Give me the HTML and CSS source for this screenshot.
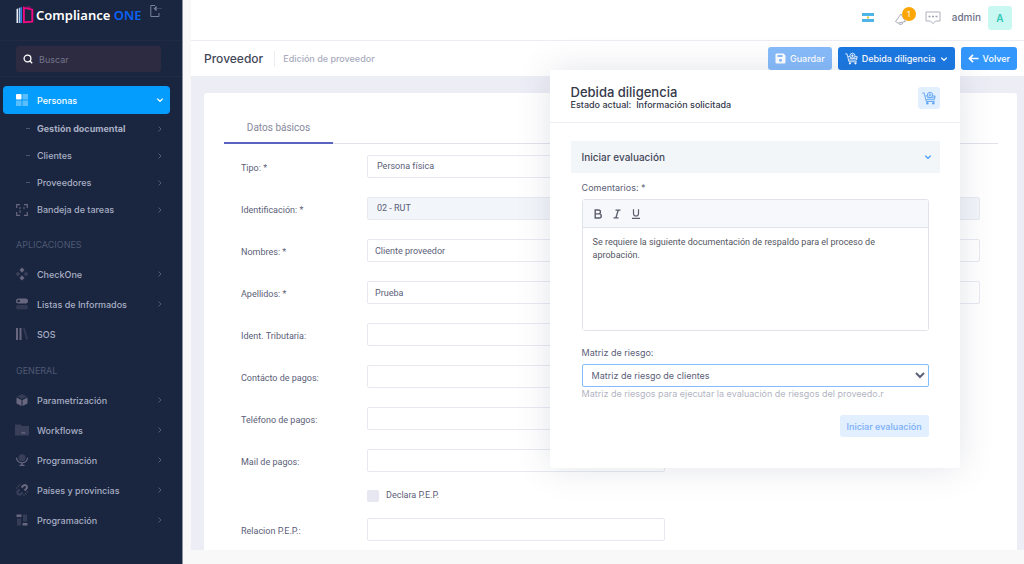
FILE: index.html
```html
<!DOCTYPE html>
<html lang="es">
<head>
<meta charset="utf-8">
<meta name="viewport" content="width=device-width, initial-scale=1">
<title>Compliance ONE - Proveedor</title>
<link rel="stylesheet" href="styles.css">
</head>
<body>
<svg class="defs" aria-hidden="true">
  <symbol id="chev" viewBox="0 0 8 8"><path d="M2.5 1.5 5 4 2.5 6.5" fill="none" stroke="currentColor" stroke-width="1"/></symbol>
  <symbol id="chev-down" viewBox="0 0 8 8"><path d="M1.2 2.6 4 5.3 6.800 2.600" fill="none" stroke="currentColor" stroke-width="1.300"/></symbol>
  <symbol id="cart" viewBox="0 0 14 14">
    <g fill="none" stroke="currentColor" stroke-width=".9">
      <path d="M.3 2h1.900l2.100 8.500h8.400M3.200 5h2M10.800 5h2.400l-.9 3.700H3.900M5 6.800h7.800"/>
      <circle cx="8" cy="4" r="2.700"/><path d="M8 2.500v3M6.600 4h2.800"/>
    </g>
    <circle cx="5.300" cy="12.200" r="1.200" fill="currentColor"/><circle cx="11.300" cy="12.200" r="1.200" fill="currentColor"/>
  </symbol>
</svg>
<div class="layout">
  <aside class="sidebar">
    <div class="brand">
      <a class="brand-link" href="#">
        <svg class="brand-mark" viewBox="0 0 18 18" aria-hidden="true">
          <path d="M.5 3 2 2.500V17H.5z" fill="#e8edf5"/><path d="M2.700 2 4.400 1.500V17H2.700z" fill="#a9c8ee"/><path d="M4.400 1.500 6 1v16H4.400z" fill="#2f7de0"/>
          <path d="M7.900 1.600 16.300 3.700v12l-8.400.5z" fill="none" stroke="#ee0a80" stroke-width="1.900"/>
          <path d="M7.900 1.600 14 .8v2.500" fill="none" stroke="#b30d74" stroke-width=".9"/>
        </svg>
        <span>Compliance <b>ONE</b></span>
      </a>
      <button class="collapse" type="button" aria-label="Contraer menú">
        <svg viewBox="0 0 14 14"><path d="M6 1.500H1.800v11H10V9" fill="none" stroke="#77809a"/><path d="M13 4.500H6M7.500 2v5L5 4.500z" fill="#aab0c2" stroke="#4d5871" stroke-width=".6"/></svg>
      </button>
    </div>
    <div class="search-wrap">
      <label class="search">
        <svg viewBox="0 0 10 10" aria-hidden="true"><circle cx="4.500" cy="4.500" r="3.400" fill="none" stroke="#fff" stroke-width="1.300"/><path d="m7 7 2.200 2.200" stroke="#fff" stroke-width="1.300"/></svg>
        <input type="search" placeholder="Buscar" aria-label="Buscar">
      </label>
    </div>
    <nav class="nav">
      <a class="item active" href="#"><svg class="ico" viewBox="0 0 12 12"><rect width="5.500" height="5.500" rx="1" fill="#fff"/><path d="M6.500 0H12v5.500H6.500zM0 6.500h5.500V12H0zM6.500 6.500H12V12H6.500z" fill="#fff" opacity=".35"/></svg><span>Personas</span><svg class="arrow"><use href="#chev-down"/></svg></a>
      <a class="item sub strong" href="#"><i></i><span>Gestión documental</span><svg class="arrow"><use href="#chev"/></svg></a>
      <a class="item sub" href="#"><i></i><span>Clientes</span><svg class="arrow"><use href="#chev"/></svg></a>
      <a class="item sub" href="#"><i></i><span>Proveedores</span><svg class="arrow"><use href="#chev"/></svg></a>
      <a class="item sub" href="#"><svg class="ico" viewBox="0 0 12 12"><path d="M.7 4V.7H4M8 .7h3.300V4M11.300 8v3.300H8M4 11.300H.7V8" fill="none" stroke="currentColor" stroke-width="1.200"/><path d="M3 3h2v2H3zM3 6h2v3H3zM7 3h2v2H7z" fill="currentColor" opacity=".5"/></svg><span>Bandeja de tareas</span><svg class="arrow"><use href="#chev"/></svg></a>
      <h2>APLICACIONES</h2>
      <a class="item" href="#"><svg class="ico" viewBox="0 0 12 12"><path d="m6-.5 2.500 2.600L6 4.700 3.500 2.100zM6 7.300l2.500 2.600L6 12.500 3.500 9.900z" fill="currentColor"/><path d="m2 3.600 2.300 2.400L2 8.400-.3 6zM10 3.600 12.300 6 10 8.400 7.700 6z" fill="currentColor" opacity=".4"/></svg><span>CheckOne</span><svg class="arrow"><use href="#chev"/></svg></a>
      <a class="item" href="#"><svg class="ico" viewBox="0 0 12 12"><rect y=".5" width="12" height="5" rx="2.500" fill="currentColor"/><circle cx="2.700" cy="3" r="1.300" fill="#1a2640"/><rect y="7" width="12" height="4.500" rx="2.200" fill="currentColor" opacity=".3"/></svg><span>Listas de Informados</span><svg class="arrow"><use href="#chev"/></svg></a>
      <a class="item" href="#"><svg class="ico" viewBox="0 0 12 12"><path d="M0 0h2v12H0zM3.500 0h2v12h-2z" fill="currentColor"/><path d="m7 .6 1.600-.6 3.400 11-1.600.8z" fill="currentColor" opacity=".35"/></svg><span>SOS</span></a>
      <h2>GENERAL</h2>
      <a class="item" href="#"><svg class="ico" viewBox="0 0 12 12"><path d="m6 0 5 2.500L6 5 1 2.500z" fill="currentColor" opacity=".35"/><path d="m.5 3.500 5 2.500v6l-5-2.500zM11.500 3.500l-5 2.500v6l5-2.500z" fill="currentColor"/></svg><span>Parametrización</span><svg class="arrow"><use href="#chev"/></svg></a>
      <a class="item" href="#"><svg class="ico" viewBox="0 0 12 12"><path d="M-1 .5h5.500L6 2h7v9.500H-1z" fill="currentColor" opacity=".4"/><path d="m5 9.500 1.500-2 1.300 1 1-.6L10 9.500z" fill="currentColor"/></svg><span>Workflows</span><svg class="arrow"><use href="#chev"/></svg></a>
      <a class="item" href="#"><svg class="ico" viewBox="0 0 12 12"><circle cx="6" cy="3.700" r="3.500" fill="currentColor" opacity=".4"/><path d="M.5 3.800C.8 10.500 11.200 10.500 11.500 3.800M6 8.500v3M3.500 11.400h5" fill="none" stroke="currentColor" stroke-width="1.300"/></svg><span>Programación</span><svg class="arrow"><use href="#chev"/></svg></a>
      <a class="item" href="#"><svg class="ico" viewBox="0 0 12 12"><path d="m5.500 3.500 1.800-1.800a2 2 0 0 1 3 3L8.500 6.500" fill="none" stroke="currentColor" stroke-width="2"/><path d="M3.500 5.500 2 7a2 2 0 0 0 3 3l1.500-1.500" fill="none" stroke="currentColor" stroke-width="2" opacity=".4"/><path d="M1.500 1.500 3 3M4 0v1.500M0 4h1.500M9 9l1.500 1.500M8 10.500V12M10.500 8H12" stroke="currentColor" opacity=".6"/></svg><span>Países y provincias</span><svg class="arrow"><use href="#chev"/></svg></a>
      <a class="item" href="#"><svg class="ico" viewBox="0 0 12 12"><path d="M.5.5h5v2.500h-5zM6.500 9h5v2.500h-5z" fill="currentColor"/><path d="M1 4.500h4v7H1zM7 .5h4v7H7z" fill="currentColor" opacity=".35"/></svg><span>Programación</span><svg class="arrow"><use href="#chev"/></svg></a>
    </nav>
  </aside>

  <div class="app">
    <header class="topbar">
      <svg class="flag" viewBox="0 0 12 9" role="img" aria-label="Argentina"><path d="M0 0h12v9H0z" fill="#4fb4e8"/><path d="M0 3h12v3H0z" fill="#fff"/><circle cx="6" cy="4.500" r="1.200" fill="#e3cf45"/></svg>
      <button class="notify" type="button" aria-label="Notificaciones">
        <svg viewBox="0 0 14 14"><path d="M1.500 10.500 7 3l4.500 7.500-7.500 1.700zM5 12.200l.6 1.300 3-.6-.3-1.300" fill="none" stroke="#a9abb8"/></svg>
        <span class="badge">1</span>
      </button>
      <button class="chat" type="button" aria-label="Mensajes"><svg viewBox="0 0 16 14"><path d="M1 1h14v9h-4.500L8 12.700 5.500 10H1z" fill="none" stroke="#b0b2be"/><path d="M3.500 5.500h2M7 5.500h2M10.500 5.500h2" stroke="#a0a2b0" stroke-width="1.500"/></svg></button>
      <span class="user">admin</span>
      <span class="avatar">A</span>
    </header>

    <div class="subheader">
      <h1>Proveedor</h1>
      <span class="crumb">Edición de proveedor</span>
      <div class="actions">
        <button class="btn light" type="button"><svg viewBox="0 0 11 11"><path d="M1.500.5h7L10.500 2.500v7a1 1 0 0 1-1 1h-8a1 1 0 0 1-1-1v-8a1 1 0 0 1 1-1z" fill="#fff"/><path d="M2.500 2h5v2h-5z" fill="#86bbfa"/><circle cx="5.500" cy="7.300" r="1.500" fill="#86bbfa"/></svg>Guardar</button>
        <div class="dropdown">
          <button class="btn dark" type="button" aria-expanded="true"><svg class="cart"><use href="#cart"/></svg>Debida diligencia<svg class="caret"><use href="#chev-down"/></svg></button>
          <section class="popover" aria-label="Debida diligencia">
            <header class="pop-head">
              <div>
                <h2>Debida diligencia</h2>
                <p>Estado actual:&nbsp; Información solicitada</p>
              </div>
              <button class="pop-icon" type="button" aria-label="Debida diligencia"><svg><use href="#cart"/></svg></button>
            </header>
            <div class="pop-body">
              <button class="accordion" type="button" aria-expanded="true">Iniciar evaluación<svg><use href="#chev-down"/></svg></button>
              <div class="pop-form">
                <label for="comentarios">Comentarios: *</label>
                <div class="editor">
                  <div class="toolbar">
                    <button type="button" aria-label="Negrita"><svg viewBox="0 0 10 10"><path d="M2.200 1h3.300a1.900 1.900 0 0 1 0 3.900H2.200zM2.200 4.900h4a2 2 0 0 1 0 4.100h-4z" fill="none" stroke="currentColor" stroke-width="1.400"/></svg></button>
                    <button type="button" aria-label="Cursiva"><svg viewBox="0 0 10 10"><path d="M3.500 1.200h5M1.500 8.800h5M6.200 1.200 3.900 8.800" fill="none" stroke="currentColor" stroke-width="1.300"/></svg></button>
                    <button type="button" aria-label="Subrayado"><svg viewBox="0 0 10 10"><path d="M2.500.3v4.200a2.500 2.500 0 0 0 5 0V.3M1 9.300h8" fill="none" stroke="currentColor" stroke-width="1.200"/></svg></button>
                  </div>
                  <textarea id="comentarios">Se requiere la siguiente documentación de respaldo para el proceso de aprobación.</textarea>
                </div>
                <label for="matriz">Matriz de riesgo:</label>
                <select id="matriz"><option>Matriz de riesgo de clientes</option></select>
                <p class="hint">Matriz de riesgos para ejecutar la evaluación de riesgos del proveedo.r</p>
                <button class="start" type="button">Iniciar evaluación</button>
              </div>
            </div>
          </section>
        </div>
        <button class="btn primary" type="button"><svg viewBox="0 0 12 10"><path d="M11.500 5H1.500M5.500 1l-4 4 4 4" fill="none" stroke="#fff" stroke-width="1.800"/></svg>Volver</button>
      </div>
    </div>

    <main class="content">
      <form class="card">
        <div class="tabs"><button type="button" class="tab">Datos básicos</button></div>
        <div class="fields">
          <div class="row"><label for="tipo">Tipo: *</label><select id="tipo" class="control pick"><option>Persona física</option></select></div>
          <div class="row"><label for="ident">Identificación: *</label><select id="ident" class="control pick" disabled><option>02 - RUT</option></select><input class="control" aria-label="Número de identificación" disabled></div>
          <div class="row"><label for="nombres">Nombres: *</label><input id="nombres" class="control" value="Cliente proveedor"><input class="control" aria-label="Segundo nombre"></div>
          <div class="row"><label for="apellidos">Apellidos: *</label><input id="apellidos" class="control" value="Prueba"><input class="control" aria-label="Segundo apellido"></div>
          <div class="row"><label for="trib">Ident. Tributaria:</label><input id="trib" class="control"></div>
          <div class="row"><label for="contacto">Contácto de pagos:</label><input id="contacto" class="control"></div>
          <div class="row"><label for="tel">Teléfono de pagos:</label><input id="tel" class="control"></div>
          <div class="row"><label for="mail">Mail de pagos:</label><input id="mail" class="control"></div>
          <div class="row check-row"><label class="check"><input type="checkbox">Declara P.E.P.</label></div>
          <div class="row"><label for="rel">Relacion P.E.P.:</label><input id="rel" class="control"></div>
        </div>
      </form>
    </main>
  </div>
</div>
</body>
</html>
```
FILE: styles.css
```css
* { box-sizing: border-box; }
body { margin: 0; background: #f8f8f8; color: #5c6078; font: 9px/13px Inter, sans-serif; }
button, input, select, textarea { font: inherit; color: inherit; margin: 0; }
button { border: 0; padding: 0; background: none; cursor: pointer; }
h1, h2, p { margin: 0; }
a { color: inherit; text-decoration: none; }
svg { display: block; flex: none; }
.defs { display: none; }

.layout { display: flex; min-height: 100vh; }

/* Sidebar */
.sidebar { flex: none; width: 183px; background: #1a2640; border-right: 1px solid #8b90a0; }
.brand { display: flex; justify-content: space-between; height: 41px; padding: 4px 19px 0 16px; border-bottom: 1px solid #202b43; }
.brand-link { display: flex; gap: 2px; height: 22px; align-items: center; color: #fff; font: 600 13px/20px "Noto Sans", sans-serif; }
.brand-link b { color: #0c62f5; font-weight: 600; }
.brand-mark { width: 18px; height: 18px; }
.collapse { width: 14px; height: 14px; }
.collapse svg { width: 14px; height: 14px; }
.search-wrap { padding: 5px 21px 4px 16px; border-bottom: 1px solid #202b43; }
.search { display: flex; align-items: center; gap: 6px; height: 26px; padding: 0 7px; border-radius: 3px; background: #2c2b41; }
.search svg { width: 10px; height: 10px; }
.search input { flex: 1; min-width: 0; border: 0; padding: 0; background: none; outline: 0; }
.search input::placeholder { color: #747389; opacity: 1; }
.nav { padding: 9px 12px 8px 3px; color: #a9afc4; font-weight: 500; }
.nav h2 { height: 36px; padding: 15px 0 0 13px; color: #4f5872; font-size: 9px; line-height: 13px; font-weight: 400; }
.item { display: flex; align-items: center; height: 30px; padding: 0 6px 0 13px; }
.item span { flex: 1; }
.item .ico { width: 12px; height: 12px; margin-right: 9px; color: #69677f; overflow: visible; }
.arrow { width: 8px; height: 8px; color: #525b76; }
.item.active { height: 28px; margin-bottom: 1px; border-radius: 4px; background: #049cfd; color: #fff; }
.item.active .ico { color: #fff; }
.item.active .arrow { color: #fff; }
.item.sub { height: 27px; }
.item.sub i { width: 4px; height: 1px; margin: 0 7px 0 10px; background: #4b5570; }
.item.strong { font-weight: 700; }

/* Application frame */
.app { flex: 1; min-width: 0; display: flex; flex-direction: column; margin: 0 0 14px 8px; background: #ecedf5; }
.topbar { display: flex; align-items: center; justify-content: flex-end; height: 40px; padding: 0 12px 5px 0; background: #fff; }
.flag { width: 12px; height: 9px; }
.notify { position: relative; width: 14px; height: 14px; margin-left: 20px; }
.notify svg { width: 14px; height: 14px; }
.badge { position: absolute; left: 8px; top: -4px; width: 14px; height: 14px; border-radius: 7px; background: #fca606; color: #fff; font-size: 8px; line-height: 14px; text-align: center; }
.chat { margin-left: 17px; }
.chat svg { width: 16px; height: 14px; }
.user { margin-left: 11px; color: #6c7085; font-size: 10px; font-weight: 500; }
.avatar { width: 24px; height: 24px; margin-left: 7px; border-radius: 3px; background: #c9f7f2; color: #2fc6b4; font-size: 10px; line-height: 24px; font-weight: 600; text-align: center; }
.subheader { display: flex; align-items: center; height: 36px; padding: 0 7px 0 13px; border-top: 1px solid #ececf3; background: #fff; }
.subheader h1 { padding-right: 11px; border-right: 1px solid #ebecf2; color: #434758; font-size: 12px; line-height: 16px; font-weight: 500; }
.crumb { padding-left: 8px; color: #a9abbd; font-weight: 500; }
.actions { display: flex; gap: 6px; margin-left: auto; }
.btn { display: flex; align-items: center; gap: 4px; height: 23px; padding: 0 7px; border-radius: 3px; color: #fff; font-weight: 500; white-space: nowrap; }
.btn svg { width: 11px; height: 11px; }
.btn .cart { width: 13px; height: 13px; }
.btn .caret { width: 8px; height: 8px; }
.light { background: #86bbfa; }
.dark { background: #1a78e2; }
.primary { background: #3497fc; }

/* Form */
.content { flex: 1; display: flex; padding: 17px 7px 0 13px; }
.card { flex: 1; min-width: 0; padding: 19px 19px 9px 20px; border-radius: 3px 3px 0 0; background: #fff; font: 9px/13px Roboto, sans-serif; }
.tabs { height: 32px; border-bottom: 1px solid #e1e2ea; }
.tab { width: 109px; height: 32px; border-bottom: 2px solid #5a64c0; color: #86889a; font-size: 10px; }
.fields { display: grid; gap: 19px; padding: 11px 18px 0 17px; }
.row { display: grid; grid-template-columns: 126px 1fr 1fr; align-items: center; }
.row > label:first-child { padding-top: 3px; }
.control { width: 100%; height: 23px; padding: 0 7px; border: 1px solid #e7e9f2; border-radius: 2px; background: #fff; }
.row .control:nth-child(2) { width: calc(100% - 9px); }
.row .control:nth-child(3) { margin-left: 9px; width: calc(100% - 9px); }
.control:disabled { background: #f2f5f9; color: #5c6078; opacity: 1; }
.pick { appearance: none; padding-left: 9px; }
.check-row { margin: -2px 0 -3px; }
.row > label.check { grid-column: 2; display: flex; align-items: center; gap: 7px; padding: 0; }
.check input { appearance: none; width: 12px; height: 12px; border-radius: 2px; background: #e6e7f1; }

/* Due diligence menu */
.dropdown { position: relative; }
.popover { position: absolute; z-index: 2; top: 23px; right: -5px; width: 410px; padding-bottom: 31px; background: #fff; border-radius: 2px; box-shadow: 0 0 34px rgba(70, 72, 110, .15); }
.pop-head { display: flex; align-items: center; justify-content: space-between; height: 53px; padding: 3px 20px 0 21px; border-bottom: 1px solid #ececf2; color: #34384a; }
.pop-head h2 { font-size: 13px; line-height: 14px; font-weight: 500; }
.pop-head p { line-height: 12px; font-size: 9px; font-weight: 500; }
.pop-icon { width: 22px; height: 22px; padding: 4px; border-radius: 3px; background: #e1effe; color: #5da4f5; }
.pop-icon svg { width: 14px; height: 14px; }
.pop-body { padding: 18px 20px 0 21px; }
.accordion { display: flex; align-items: center; justify-content: space-between; width: 100%; height: 32px; padding: 0 8px 0 11px; background: #f3f6f9; color: #434758; font-size: 10px; font-weight: 500; }
.accordion svg { width: 8px; height: 8px; color: #469bf8; }
.pop-form { display: flex; flex-direction: column; padding: 8px 11px 0; }
.editor { margin: 5px 0 15px; border: 1px solid #e0e3ea; border-radius: 3px; }
.toolbar { display: flex; gap: 9px; height: 28px; align-items: center; padding-left: 10px; border-bottom: 1px solid #e0e3ea; background: #f7f8fb; color: #595d6c; }
.toolbar svg { width: 10px; height: 10px; }
.editor textarea { display: block; width: 100%; height: 102px; padding: 8px 46px 8px 10px; border: 0; outline: 0; resize: none; background: #fff; color: #54565f; font: 9px/13px Roboto, sans-serif; }
.pop-form select { height: 23px; margin-top: 5px; padding: 0 0 0 5px; border: 1px solid #83bdfb; border-radius: 2px; background: #fff; }
.hint { color: #b3b5c2; white-space: nowrap; }
.start { align-self: flex-end; height: 22px; margin-top: 15px; padding: 0 7px; border-radius: 3px; background: #e1effe; color: #79aefb; font-weight: 500; }
```
